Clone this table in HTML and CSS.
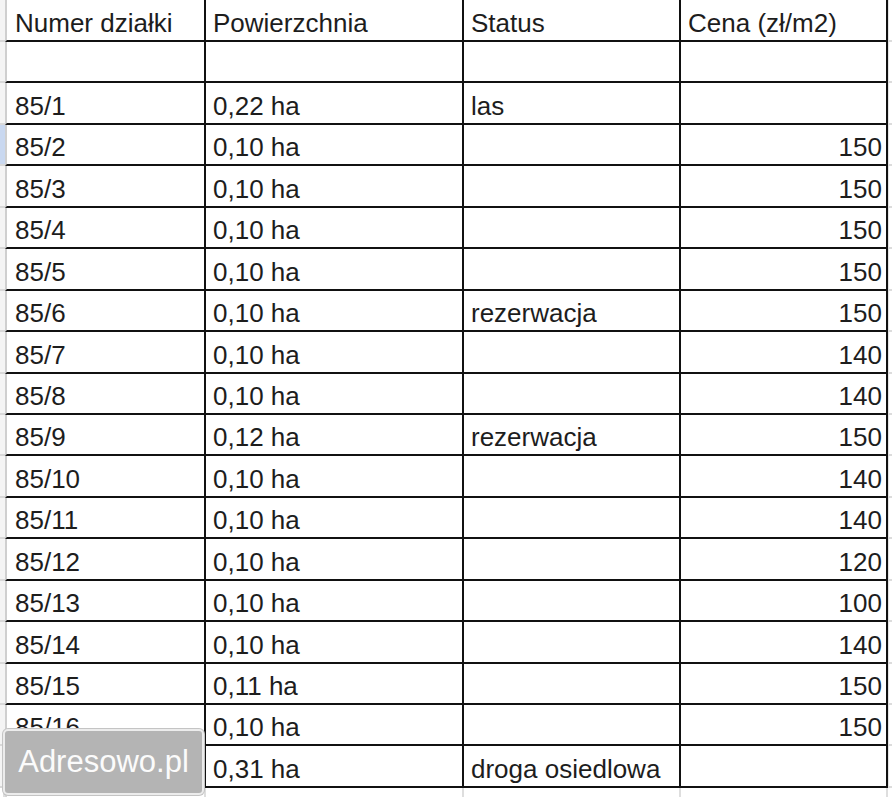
FILE: index.html
```html
<!DOCTYPE html>
<html lang="pl">
<head>
<meta charset="utf-8">
<title>Działki</title>
<link rel="stylesheet" href="styles.css">
</head>
<body>
<div class="sheet">
  <div class="gutter"></div><div class="cell first">Numer działki</div><div class="cell">Powierzchnia</div><div class="cell">Status</div><div class="cell">Cena (zł/m2)</div><div class="edge"></div>
  <div class="gutter"></div><div class="cell first"></div><div class="cell"></div><div class="cell"></div><div class="cell"></div><div class="edge"></div>
  <div class="gutter"></div><div class="cell first">85/1</div><div class="cell">0,22 ha</div><div class="cell">las</div><div class="cell num"></div><div class="edge"></div>
  <div class="gutter selected"></div><div class="cell first">85/2</div><div class="cell">0,10 ha</div><div class="cell"></div><div class="cell num">150</div><div class="edge"></div>
  <div class="gutter"></div><div class="cell first">85/3</div><div class="cell">0,10 ha</div><div class="cell"></div><div class="cell num">150</div><div class="edge"></div>
  <div class="gutter"></div><div class="cell first">85/4</div><div class="cell">0,10 ha</div><div class="cell"></div><div class="cell num">150</div><div class="edge"></div>
  <div class="gutter"></div><div class="cell first">85/5</div><div class="cell">0,10 ha</div><div class="cell"></div><div class="cell num">150</div><div class="edge"></div>
  <div class="gutter"></div><div class="cell first">85/6</div><div class="cell">0,10 ha</div><div class="cell">rezerwacja</div><div class="cell num">150</div><div class="edge"></div>
  <div class="gutter"></div><div class="cell first">85/7</div><div class="cell">0,10 ha</div><div class="cell"></div><div class="cell num">140</div><div class="edge"></div>
  <div class="gutter"></div><div class="cell first">85/8</div><div class="cell">0,10 ha</div><div class="cell"></div><div class="cell num">140</div><div class="edge"></div>
  <div class="gutter"></div><div class="cell first">85/9</div><div class="cell">0,12 ha</div><div class="cell">rezerwacja</div><div class="cell num">150</div><div class="edge"></div>
  <div class="gutter"></div><div class="cell first">85/10</div><div class="cell">0,10 ha</div><div class="cell"></div><div class="cell num">140</div><div class="edge"></div>
  <div class="gutter"></div><div class="cell first">85/11</div><div class="cell">0,10 ha</div><div class="cell"></div><div class="cell num">140</div><div class="edge"></div>
  <div class="gutter"></div><div class="cell first">85/12</div><div class="cell">0,10 ha</div><div class="cell"></div><div class="cell num">120</div><div class="edge"></div>
  <div class="gutter"></div><div class="cell first">85/13</div><div class="cell">0,10 ha</div><div class="cell"></div><div class="cell num">100</div><div class="edge"></div>
  <div class="gutter"></div><div class="cell first">85/14</div><div class="cell">0,10 ha</div><div class="cell"></div><div class="cell num">140</div><div class="edge"></div>
  <div class="gutter"></div><div class="cell first">85/15</div><div class="cell">0,11 ha</div><div class="cell"></div><div class="cell num">150</div><div class="edge"></div>
  <div class="gutter"></div><div class="cell first">85/16</div><div class="cell">0,10 ha</div><div class="cell"></div><div class="cell num">150</div><div class="edge"></div>
  <div class="gutter"></div><div class="cell first"></div><div class="cell">0,31 ha</div><div class="cell">droga osiedlowa</div><div class="cell num"></div><div class="edge"></div>
  <div class="tail"></div><div class="tail first"></div><div class="tail"></div><div class="tail"></div><div class="tail"></div><div class="tail end"></div>
</div>
<div class="watermark">Adresowo.pl</div>
</body>
</html>
```

FILE: styles.css
```css
html, body {
  margin: 0;
  padding: 0;
  background: #ffffff;
}
body {
  width: 892px;
  height: 797px;
  overflow: hidden;
  position: relative;
  font-family: "Liberation Sans", Arial, sans-serif;
}
.sheet {
  display: grid;
  grid-template-columns: 5px 201px 258px 217px 207px 4px;
  grid-template-rows: 42px repeat(18, 41.44px) 12px;
}
.gutter {
  background: #f4f4f4;
  border-bottom: 2px solid #d8d8d8;
}
.gutter.selected {
  background: #c9d8f0;
}
.edge {
  border-bottom: 2px solid #dcdcdc;
  border-left: 1px solid #e4e4e4;
}
.cell {
  box-sizing: border-box;
  border-right: 2px solid #111111;
  border-bottom: 2px solid #111111;
  display: flex;
  align-items: flex-end;
  padding: 0 4px 2px 7px;
  font-size: 26px;
  line-height: 30px;
  color: #1d1d1d;
  white-space: nowrap;
  overflow: hidden;
}
.cell.first {
  border-left: 2px solid #cfcfcf;
  padding-left: 8px;
}
.cell.num {
  justify-content: flex-end;
}
.tail {
  border-right: 2px solid #dedede;
}
.tail.first {
  border-left: 2px solid #d6d6d6;
}
.tail.end {
  border-right: none;
}
.watermark {
  position: absolute;
  left: 3px;
  top: 729px;
  width: 201px;
  height: 66px;
  box-sizing: border-box;
  background: #b4b4b4;
  border: 2px solid #ececec;
  border-radius: 5px;
  box-shadow: 0 0 0 1px #c4c4c4;
  color: #fbfbfb;
  font-size: 31px;
  line-height: 62px;
  text-align: center;
  font-family: "Liberation Sans", Arial, sans-serif;
}
```
